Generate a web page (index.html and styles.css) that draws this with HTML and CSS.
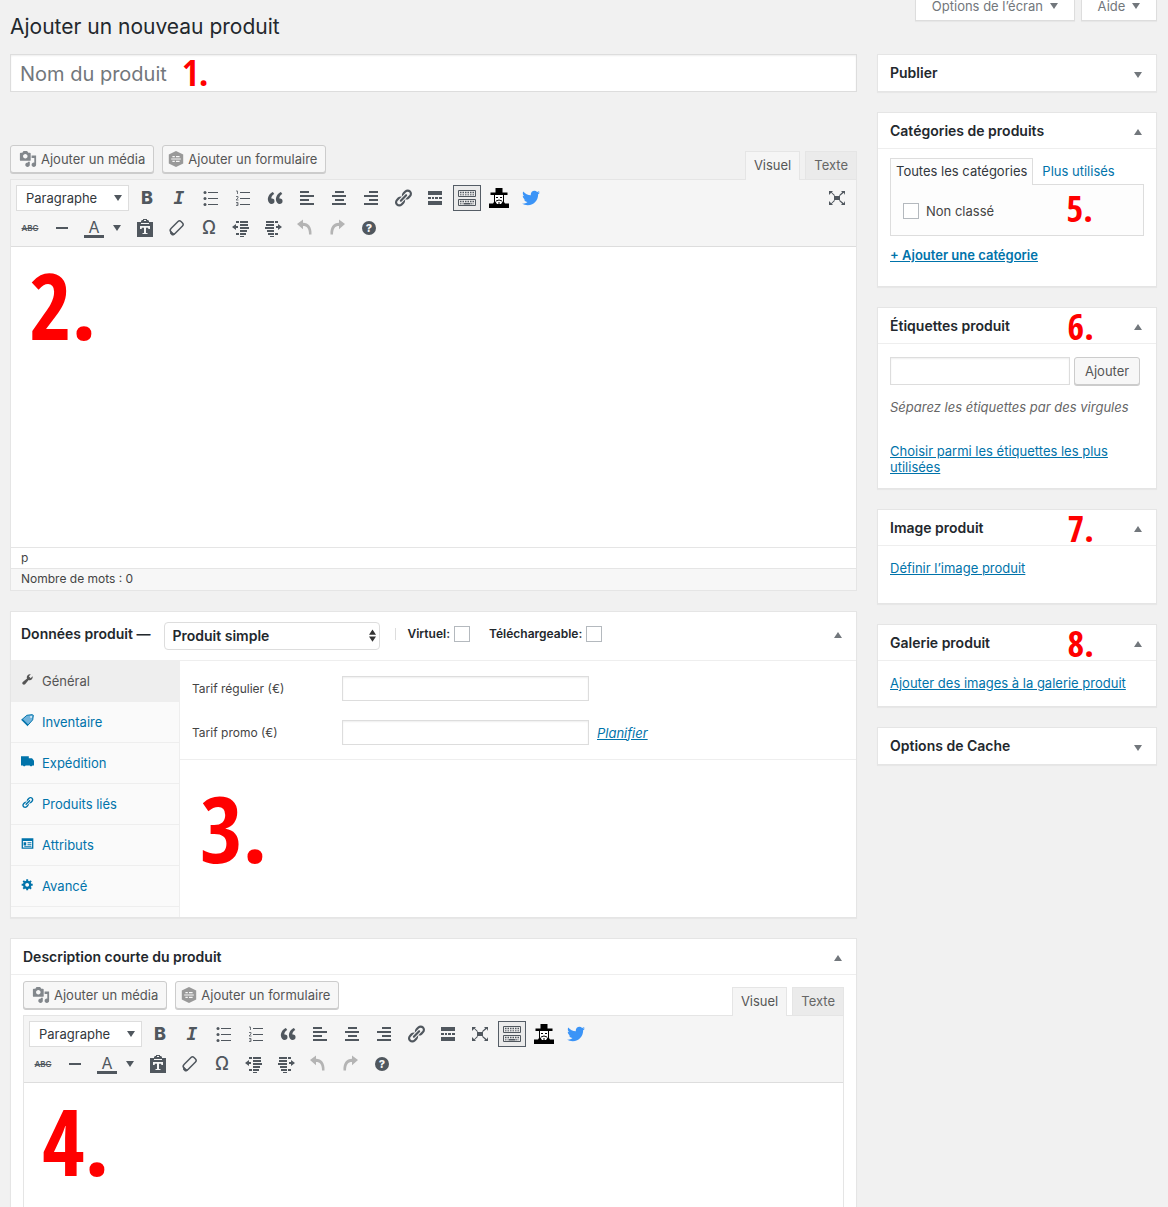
FILE: index.html
```html
<!DOCTYPE html>
<html lang="fr">
<head>
    <meta charset="UTF-8">
    <meta name="viewport" content="width=device-width, initial-scale=1.0">
    <title>Ajouter un nouveau produit</title>
    <link rel="stylesheet" href="styles.css">
</head>
<body>
    <!-- Icon sprite, everything on a 20x20 grid -->
    <svg class="sprite" aria-hidden="true">
        <symbol id="i-media" viewBox="0 0 20 20"><path d="M13 11V4c0-.55-.45-1-1-1h-1.67L9 1H5L3.67 3H2c-.55 0-1 .45-1 1v7c0 .55.45 1 1 1h10c.55 0 1-.45 1-1zM7 4.5c1.38 0 2.5 1.12 2.5 2.5S8.38 9.5 7 9.5 4.5 8.38 4.5 7 5.62 4.5 7 4.5zM14 6h5v10.5c0 1.38-1.12 2.5-2.5 2.5S14 17.88 14 16.5s1.12-2.5 2.5-2.5c.17 0 .34.02.5.05V9h-3V6zm-4 8.05V13h2v3.5c0 1.38-1.12 2.5-2.5 2.5S7 17.88 7 16.5 8.12 14 9.5 14c.17 0 .34.02.5.05z"/></symbol>
        <symbol id="i-form" viewBox="0 0 20 20"><path d="M10 0l9 4.5v11L10 20l-9-4.5v-11z"/><path d="M5.5 7h3M10 7h4.500M5.500 13h3M10 13h4.500M4 10h12" stroke="#f7f7f7" stroke-width="1.5"/></symbol>
        <symbol id="i-ul" viewBox="0 0 20 20"><circle cx="4" cy="4.5" r="1.5"/><circle cx="4" cy="10.5" r="1.5"/><circle cx="4" cy="16.5" r="1.5"/><path d="M7 4h10v1H7zM7 10h10v1H7zM7 16h10v1H7z"/></symbol>
        <symbol id="i-ol" viewBox="0 0 20 20"><path d="M7 4h10v1H7zM7 10h10v1H7zM7 16h10v1H7z"/><path d="M3 3h1.5v3M3 8.500h2v1.500l-2 2h2.500M3 14.500h2v3H3M3.500 16H5" fill="none" stroke="currentColor" stroke-width=".8"/></symbol>
        <symbol id="i-quote" viewBox="0 0 20 20"><path d="M9.49 13.22c0-.74-.2-1.38-.61-1.9-.62-.78-1.83-.88-2.53-.72-.29-1.65 1.11-3.75 2.92-4.65L7.88 4c-2.73 1.3-5.42 4.28-4.96 8.05C3.21 14.43 4.59 16 6.54 16c.85 0 1.56-.25 2.12-.75s.83-1.18.83-2.03zm8.05 0c0-.74-.2-1.38-.61-1.9-.63-.78-1.83-.88-2.53-.72-.29-1.65 1.11-3.75 2.92-4.65L15.93 4c-2.73 1.3-5.41 4.28-4.95 8.05.29 2.38 1.66 3.95 3.61 3.95.85 0 1.56-.25 2.12-.75s.83-1.18.83-2.03z"/></symbol>
        <symbol id="i-left" viewBox="0 0 20 20"><path d="M3 3h9v2H3zM3 7h14v2H3zM3 11h9v2H3zM3 15h14v2H3z"/></symbol>
        <symbol id="i-center" viewBox="0 0 20 20"><path d="M6 3h9v2H6zM3 7h14v2H3zM6 11h9v2H6zM3 15h14v2H3z"/></symbol>
        <symbol id="i-right" viewBox="0 0 20 20"><path d="M8 3h9v2H8zM3 7h14v2H3zM8 11h9v2H8zM3 15h14v2H3z"/></symbol>
        <symbol id="i-link" viewBox="0 0 20 20"><path d="M17.74 2.76c1.68 1.69 1.68 4.41 0 6.1l-1.53 1.52c-1.12 1.12-2.7 1.47-4.14 1.09l2.62-2.61.76-.77.76-.76c.84-.84.84-2.2 0-3.04-.84-.85-2.2-.85-3.04 0l-.77.76-3.38 3.38c-.37-1.44-.02-3.02 1.1-4.14l1.52-1.53c1.69-1.68 4.42-1.68 6.1 0zM8.59 13.43l5.34-5.34c.42-.42.42-1.1 0-1.52-.44-.43-1.13-.39-1.53 0l-5.33 5.34c-.42.42-.42 1.1 0 1.52.44.43 1.13.39 1.52 0zm-.76 2.29l4.14-4.15c.38 1.44.03 3.02-1.09 4.14l-1.52 1.53c-1.69 1.68-4.41 1.68-6.1 0-1.68-1.68-1.68-4.42 0-6.1l1.53-1.52c1.12-1.12 2.7-1.47 4.14-1.1l-4.14 4.15c-.85.84-.85 2.2 0 3.05.84.84 2.2.84 3.04 0z"/></symbol>
        <symbol id="i-more" viewBox="0 0 20 20"><path d="M3 3h14v4H3zM3 13h14v4H3zM3 9h3v2H3zM7 9h2v2H7zM10 9h3v2h-3zM14 9h3v2h-3z"/></symbol>
        <symbol id="i-full" viewBox="0 0 20 20"><path d="M7 8h6v4H7zM2 3h4L4.800 4.200 8 7.200 7.200 8 4.200 4.800 2 7zM18 3v4l-1.200-2.200L12.800 8l-.8-.8 3.200-3L14 3zM2 17v-4l2.200 2.200L7.200 12l.8.8-3.200 3L6 17zM18 17h-4l1.200-1.200-3.200-3 .8-.8 4 3.200L18 13z"/></symbol>
        <symbol id="i-kitchen" viewBox="0 0 20 20"><path d="M1.500 2.500h17v6h-17zM1.500 11.500h17v6h-17z" fill="none" stroke="currentColor"/><path d="M3 4.500h14M3 13.500h14" stroke="currentColor" stroke-width="1.500" stroke-dasharray="1.500 1"/><path d="M3 6.800h14M3 15.800h3M14 15.800h3" stroke="currentColor" stroke-dasharray="1.500 1"/><path d="M6.500 15h7v1.500h-7z"/></symbol>
        <symbol id="i-hat" viewBox="0 0 20 20"><path d="M6.500 0h7v4.500h5V7H15v7l1 1.500h4V20H0v-4.500h4L5 14V7H1.500V4.500h5z"/><path d="M6 7h8v6l-2 3H8l-2-3z" fill="#fff"/><path d="M7 9h2v1H7zM11 9h2v1h-2zM7 12.500l3-1 3 1v1l-3-1-3 1zM9 14.500h2v1H9z"/></symbol>
        <symbol id="i-twitter" viewBox="0 0 20 20"><path d="M18.94 4.46c-.49.73-1.11 1.38-1.83 1.9.01.15.01.31.01.47 0 4.85-3.69 10.44-10.43 10.44-2.07 0-4-.61-5.63-1.65.29.03.58.05.88.05 1.72 0 3.3-.59 4.55-1.57-1.6-.03-2.95-1.09-3.42-2.55.22.04.45.07.69.07.33 0 .66-.05.96-.13-1.67-.34-2.94-1.82-2.94-3.6v-.04c.5.27 1.06.44 1.66.46-.98-.66-1.63-1.78-1.63-3.06 0-.67.18-1.3.5-1.84 1.81 2.22 4.51 3.68 7.56 3.83-.06-.27-.1-.55-.1-.84 0-2.02 1.65-3.66 3.67-3.66 1.06 0 2.01.44 2.68 1.16.83-.17 1.62-.47 2.33-.89-.28.85-.86 1.57-1.62 2.02.75-.08 1.45-.28 2.11-.57z"/></symbol>
        <symbol id="i-hr" viewBox="0 0 20 20"><path d="M4 9h12v2H4z"/></symbol>
        <symbol id="i-paste" viewBox="0 0 20 20"><path fill-rule="evenodd" d="M2 4h4V3l1-1h1V1h4v1h1l1 1v1h4v15H2zM6 5v1h8V5zM9 3h2V2H9zM5 8v3h1.500l.5-1.300h2V15H7.500v1h5v-1H11V9.700h2l.5 1.300H15V8z"/></symbol>
        <symbol id="i-eraser" viewBox="0 0 20 20"><path d="M4 10.500L11 3.500c1-1 2-1 3 0l1.500 1.500c1 1 1 2 0 3L8 15.500c-1 1-2 1-3 0L4 14c-1-1-1-2.500 0-3.500z" fill="none" stroke="currentColor" stroke-width="1.500"/><path d="M3.500 12.500l4.500 4-1.500 1H5l-2-2z"/></symbol>
        <symbol id="i-outdent" viewBox="0 0 20 20"><path d="M5 3h3v2H5zM9 3h8v2H9zM9 6h8v2H9zM9 9h9v2H9zM9 12h7v2H9zM5 15h3v2H5zM9 15h6v2H9zM1 9l4-3v2h2v2H5v2zM9 18h4v1H9z"/></symbol>
        <symbol id="i-indent" viewBox="0 0 20 20"><path d="M3 3h8v2H3zM12 3h3v2h-3zM3 6h8v2H3zM2 9h9v2H2zM4 12h7v2H4zM5 15h6v2H5zM12 15h3v2h-3zM19 9l-4-3v2h-2v2h2v2zM7 18h4v1H7z"/></symbol>
        <symbol id="i-undo" viewBox="0 0 20 20"><path d="M2 6l6-4.500v3.200c5.500 0 9 4 8.500 11.800h-2.500c0-6-2-8.500-6-8.500v3.200z"/></symbol>
        <symbol id="i-redo" viewBox="0 0 20 20"><path d="M18 6l-6-4.500v3.200c-5.500 0-9 4-8.500 11.800H6c0-6 2-8.500 6-8.500v3.200z"/></symbol>
        <symbol id="i-wrench" viewBox="0 0 20 20"><path d="M16.68 9.77c-1.34 1.34-3.3 1.67-4.95.99l-5.41 6.52c-.99.99-2.59.99-3.58 0s-.99-2.59 0-3.57l6.52-5.42c-.68-1.65-.35-3.61.99-4.95 1.28-1.28 3.12-1.62 4.72-1.06l-2.89 2.89 2.82 2.82 2.86-2.87c.53 1.58.18 3.39-1.08 4.65z"/></symbol>
        <symbol id="i-tag" viewBox="0 0 20 20"><path d="M1 9l8-7 8-1 2 1-1 7-8 9z" fill="#70b3dc" stroke="#0073aa" stroke-width="1.500"/><path d="M1 9l9 9 1.500-1.500-9-9z" fill="#0073aa"/><circle cx="15.500" cy="4.500" r="1.300" fill="#fff"/></symbol>
        <symbol id="i-truck" viewBox="0 0 20 20"><path d="M0 2h12v3h5l3 4v7h-2.500a2.500 2.500 0 0 1-4 0H7a2.500 2.500 0 0 1-4 0H0z"/></symbol>
        <symbol id="i-attr" viewBox="0 0 20 20"><path fill-rule="evenodd" d="M1 2h18v16H1zM3 6v10h14V6z"/><path d="M4 8h4v5H4zM10 8h6v1.500h-6zM10 11h6v1.500h-6zM5 14h11v1H5z"/></symbol>
        <symbol id="i-gear" viewBox="0 0 20 20"><path d="M18 12h-2.18c-.17.7-.44 1.35-.81 1.93l1.54 1.54-2.1 2.1-1.54-1.54c-.58.36-1.23.63-1.91.79V19H8v-2.18c-.68-.16-1.33-.43-1.91-.79l-1.54 1.54-2.12-2.12 1.54-1.54c-.36-.58-.63-1.23-.79-1.91H1V9.03h2.17c.16-.7.44-1.35.8-1.94L2.43 5.55l2.1-2.1 1.54 1.54c.58-.37 1.24-.64 1.93-.81V2h3v2.18c.68.16 1.33.43 1.91.79l1.54-1.54 2.12 2.12-1.54 1.54c.36.59.64 1.24.8 1.94H18V12zm-8.5 1.5c1.66 0 3-1.34 3-3s-1.34-3-3-3-3 1.34-3 3 1.34 3 3 3z"/></symbol>
        <symbol id="i-updown" viewBox="0 0 8 14"><path d="M4 0l4 6H0zM4 14l4-6H0z"/></symbol>
    </svg>

    <div class="wrap">
        <div class="screen-links">
            <button type="button">Options de l’écran <span class="arrow down"></span></button>
            <button type="button">Aide <span class="arrow down"></span></button>
        </div>

        <h1>Ajouter un nouveau produit</h1>

        <div class="columns">
            <main>
                <div class="title-field">
                    <input type="text" id="title" placeholder="Nom du produit" aria-label="Nom du produit">
                    <span class="mark mark-title">1.</span>
                </div>

                <!-- Main editor -->
                <section class="editor">
                    <div class="editor-tools">
                        <div class="media-buttons">
                            <button type="button" class="button"><svg><use href="#i-media"/></svg>Ajouter un média</button>
                            <button type="button" class="button add-form"><svg><use href="#i-form"/></svg>Ajouter un formulaire</button>
                        </div>
                        <div class="editor-tabs">
                            <button type="button" class="active">Visuel</button>
                            <button type="button">Texte</button>
                        </div>
                    </div>
                    <div class="editor-container">
                        <div class="toolbar">
                            <div class="toolbar-row">
                                <div class="format">
                                    <select aria-label="Format"><option>Paragraphe</option></select>
                                    <span class="arrow down"></span>
                                </div>
                                <button type="button" class="bold" aria-label="Gras">B</button>
                                <button type="button" class="italic" aria-label="Italique">I</button>
                                <button type="button" aria-label="Liste à puces"><svg><use href="#i-ul"/></svg></button>
                                <button type="button" aria-label="Liste numérotée"><svg><use href="#i-ol"/></svg></button>
                                <button type="button" aria-label="Citation"><svg><use href="#i-quote"/></svg></button>
                                <button type="button" aria-label="Aligner à gauche"><svg><use href="#i-left"/></svg></button>
                                <button type="button" aria-label="Centrer"><svg><use href="#i-center"/></svg></button>
                                <button type="button" aria-label="Aligner à droite"><svg><use href="#i-right"/></svg></button>
                                <button type="button" aria-label="Lien"><svg><use href="#i-link"/></svg></button>
                                <button type="button" aria-label="Lire la suite"><svg><use href="#i-more"/></svg></button>
                                <button type="button" class="pressed" aria-label="Outils"><svg><use href="#i-kitchen"/></svg></button>
                                <button type="button" class="hat" aria-label="Profil"><svg><use href="#i-hat"/></svg></button>
                                <button type="button" class="twitter" aria-label="Twitter"><svg><use href="#i-twitter"/></svg></button>
                                <button type="button" class="push" aria-label="Plein écran"><svg><use href="#i-full"/></svg></button>
                            </div>
                            <div class="toolbar-row">
                                <button type="button" class="strike" aria-label="Barré">ABC</button>
                                <button type="button" aria-label="Ligne horizontale"><svg><use href="#i-hr"/></svg></button>
                                <button type="button" class="color" aria-label="Couleur du texte"><span>A</span><i class="arrow down"></i></button>
                                <button type="button" aria-label="Coller en texte"><svg><use href="#i-paste"/></svg></button>
                                <button type="button" aria-label="Effacer la mise en forme"><svg><use href="#i-eraser"/></svg></button>
                                <button type="button" class="omega" aria-label="Caractères spéciaux">Ω</button>
                                <button type="button" aria-label="Diminuer le retrait"><svg><use href="#i-outdent"/></svg></button>
                                <button type="button" aria-label="Augmenter le retrait"><svg><use href="#i-indent"/></svg></button>
                                <button type="button" class="disabled" aria-label="Annuler"><svg><use href="#i-undo"/></svg></button>
                                <button type="button" class="disabled" aria-label="Rétablir"><svg><use href="#i-redo"/></svg></button>
                                <button type="button" class="help" aria-label="Aide"><span>?</span></button>
                            </div>
                        </div>
                        <div class="editor-body">
                            <textarea aria-label="Description du produit"></textarea>
                            <span class="mark mark-big">2.</span>
                        </div>
                        <div class="path">p</div>
                        <div class="word-count">Nombre de mots : 0</div>
                    </div>
                </section>

                <!-- Product data -->
                <section class="box">
                    <div class="data-header">
                        <h2>Données produit —</h2>
                        <div class="type">
                            <select aria-label="Type de produit"><option>Produit simple</option></select>
                            <svg><use href="#i-updown"/></svg>
                        </div>
                        <span class="sep"></span>
                        <label for="virtual">Virtuel: <input type="checkbox" id="virtual"></label>
                        <label for="download">Téléchargeable: <input type="checkbox" id="download"></label>
                        <button type="button" class="toggle" aria-label="Replier"><span class="arrow up"></span></button>
                    </div>
                    <div class="data-body">
                        <nav>
                            <a href="#general" class="active"><svg><use href="#i-wrench"/></svg>Général</a>
                            <a href="#inventory"><svg><use href="#i-tag"/></svg>Inventaire</a>
                            <a href="#shipping"><svg><use href="#i-truck"/></svg>Expédition</a>
                            <a href="#linked"><svg><use href="#i-link"/></svg>Produits liés</a>
                            <a href="#attributes"><svg><use href="#i-attr"/></svg>Attributs</a>
                            <a href="#advanced"><svg><use href="#i-gear"/></svg>Avancé</a>
                        </nav>
                        <div class="data-panel">
                            <div class="pricing">
                                <div class="field">
                                    <label for="price">Tarif régulier (€)</label>
                                    <input type="text" id="price">
                                </div>
                                <div class="field">
                                    <label for="sale">Tarif promo (€)</label>
                                    <input type="text" id="sale">
                                    <a href="#schedule">Planifier</a>
                                </div>
                            </div>
                            <span class="mark mark-big">3.</span>
                        </div>
                    </div>
                </section>

                <!-- Short description -->
                <section class="box">
                    <div class="box-header">
                        <h2>Description courte du produit</h2>
                        <button type="button" class="toggle" aria-label="Replier"><span class="arrow up"></span></button>
                    </div>
                    <div class="editor small">
                        <div class="editor-tools">
                            <div class="media-buttons">
                                <button type="button" class="button"><svg><use href="#i-media"/></svg>Ajouter un média</button>
                                <button type="button" class="button add-form"><svg><use href="#i-form"/></svg>Ajouter un formulaire</button>
                            </div>
                            <div class="editor-tabs">
                                <button type="button" class="active">Visuel</button>
                                <button type="button">Texte</button>
                            </div>
                        </div>
                        <div class="editor-container">
                            <div class="toolbar">
                                <div class="toolbar-row">
                                    <div class="format">
                                        <select aria-label="Format"><option>Paragraphe</option></select>
                                        <span class="arrow down"></span>
                                    </div>
                                    <button type="button" class="bold" aria-label="Gras">B</button>
                                    <button type="button" class="italic" aria-label="Italique">I</button>
                                    <button type="button" aria-label="Liste à puces"><svg><use href="#i-ul"/></svg></button>
                                    <button type="button" aria-label="Liste numérotée"><svg><use href="#i-ol"/></svg></button>
                                    <button type="button" aria-label="Citation"><svg><use href="#i-quote"/></svg></button>
                                    <button type="button" aria-label="Aligner à gauche"><svg><use href="#i-left"/></svg></button>
                                    <button type="button" aria-label="Centrer"><svg><use href="#i-center"/></svg></button>
                                    <button type="button" aria-label="Aligner à droite"><svg><use href="#i-right"/></svg></button>
                                    <button type="button" aria-label="Lien"><svg><use href="#i-link"/></svg></button>
                                    <button type="button" aria-label="Lire la suite"><svg><use href="#i-more"/></svg></button>
                                    <button type="button" aria-label="Plein écran"><svg><use href="#i-full"/></svg></button>
                                    <button type="button" class="pressed" aria-label="Outils"><svg><use href="#i-kitchen"/></svg></button>
                                    <button type="button" class="hat" aria-label="Profil"><svg><use href="#i-hat"/></svg></button>
                                    <button type="button" class="twitter" aria-label="Twitter"><svg><use href="#i-twitter"/></svg></button>
                                </div>
                                <div class="toolbar-row">
                                    <button type="button" class="strike" aria-label="Barré">ABC</button>
                                    <button type="button" aria-label="Ligne horizontale"><svg><use href="#i-hr"/></svg></button>
                                    <button type="button" class="color" aria-label="Couleur du texte"><span>A</span><i class="arrow down"></i></button>
                                    <button type="button" aria-label="Coller en texte"><svg><use href="#i-paste"/></svg></button>
                                    <button type="button" aria-label="Effacer la mise en forme"><svg><use href="#i-eraser"/></svg></button>
                                    <button type="button" class="omega" aria-label="Caractères spéciaux">Ω</button>
                                    <button type="button" aria-label="Diminuer le retrait"><svg><use href="#i-outdent"/></svg></button>
                                    <button type="button" aria-label="Augmenter le retrait"><svg><use href="#i-indent"/></svg></button>
                                    <button type="button" class="disabled" aria-label="Annuler"><svg><use href="#i-undo"/></svg></button>
                                    <button type="button" class="disabled" aria-label="Rétablir"><svg><use href="#i-redo"/></svg></button>
                                    <button type="button" class="help" aria-label="Aide"><span>?</span></button>
                                </div>
                            </div>
                            <div class="editor-body">
                                <textarea aria-label="Description courte"></textarea>
                                <span class="mark mark-big">4.</span>
                            </div>
                        </div>
                    </div>
                </section>
            </main>

            <aside>
                <section class="box closed">
                    <div class="box-header">
                        <h2>Publier</h2>
                        <button type="button" class="toggle" aria-label="Déplier"><span class="arrow down"></span></button>
                    </div>
                </section>

                <section class="box">
                    <div class="box-header">
                        <h2>Catégories de produits</h2>
                        <button type="button" class="toggle" aria-label="Replier"><span class="arrow up"></span></button>
                    </div>
                    <div class="categories">
                        <div class="cat-tabs">
                            <a href="#all" class="active">Toutes les catégories</a>
                            <a href="#popular">Plus utilisés</a>
                        </div>
                        <div class="cat-list">
                            <label for="uncategorized"><input type="checkbox" id="uncategorized">Non classé</label>
                            <span class="mark mark-side">5.</span>
                        </div>
                        <a href="#add-category" class="add-category">+ Ajouter une catégorie</a>
                    </div>
                </section>

                <section class="box">
                    <div class="box-header">
                        <h2>Étiquettes produit</h2>
                        <span class="mark mark-side">6.</span>
                        <button type="button" class="toggle" aria-label="Replier"><span class="arrow up"></span></button>
                    </div>
                    <div class="tags">
                        <div class="tag-form">
                            <input type="text" aria-label="Étiquettes">
                            <button type="button" class="button">Ajouter</button>
                        </div>
                        <p>Séparez les étiquettes par des virgules</p>
                        <a href="#tag-cloud">Choisir parmi les étiquettes les plus utilisées</a>
                    </div>
                </section>

                <section class="box">
                    <div class="box-header">
                        <h2>Image produit</h2>
                        <span class="mark mark-side">7.</span>
                        <button type="button" class="toggle" aria-label="Replier"><span class="arrow up"></span></button>
                    </div>
                    <div class="inside image">
                        <a href="#image">Définir l’image produit</a>
                    </div>
                </section>

                <section class="box">
                    <div class="box-header">
                        <h2>Galerie produit</h2>
                        <span class="mark mark-side">8.</span>
                        <button type="button" class="toggle" aria-label="Replier"><span class="arrow up"></span></button>
                    </div>
                    <div class="inside">
                        <a href="#gallery">Ajouter des images à la galerie produit</a>
                    </div>
                </section>

                <section class="box closed">
                    <div class="box-header">
                        <h2>Options de Cache</h2>
                        <button type="button" class="toggle" aria-label="Déplier"><span class="arrow down"></span></button>
                    </div>
                </section>
            </aside>
        </div>
    </div>
</body>
</html>
```

FILE: styles.css
```css
* {
    margin: 0;
    padding: 0;
    box-sizing: border-box;
}

body {
    background-color: #f1f1f1;
    color: #444;
    font-family: Inter, "Open Sans", sans-serif;
    font-size: 13px;
    line-height: 16px;
}

button, input, select, textarea {
    font: inherit;
    color: inherit;
    border-radius: 0;
}

button {
    background: none;
    border: none;
    cursor: pointer;
}

a {
    color: #0073aa;
}

svg {
    display: block;
    fill: currentColor;
}

.sprite {
    position: absolute;
    width: 0;
    height: 0;
}

.wrap {
    height: 100vh;
    overflow: hidden;
    padding: 0 11px 0 10px;
}

/* Triangles */
.arrow {
    display: inline-block;
    border: 4px solid transparent;
    flex: none;
}

.arrow.down {
    border-top: 6px solid currentColor;
    border-bottom: 0;
}

.arrow.up {
    border-bottom: 6px solid currentColor;
    border-top: 0;
}

/* Screen options */
.screen-links {
    float: right;
    display: flex;
    gap: 6px;
}

.screen-links button {
    height: 21px;
    padding: 0 16px 8px;
    background-color: #fff;
    border: 1px solid #ddd;
    border-top: none;
    color: #72777c;
    line-height: 12px;
    box-shadow: 0 1px 1px rgba(0, 0, 0, 0.04);
}

.screen-links .arrow {
    margin: 0 0 2px 3px;
}

h1 {
    padding: 12px 0 13px;
    font-size: 21px;
    line-height: 29px;
    font-weight: 400;
    color: #23282d;
}

h2 {
    font-size: 14px;
    line-height: 20px;
    font-weight: 600;
    color: #23282d;
}

.columns {
    display: grid;
    grid-template-columns: minmax(0, 1fr) 280px;
    gap: 20px;
}

input[type="text"] {
    background-color: #fff;
    border: 1px solid #ddd;
    box-shadow: inset 0 1px 2px rgba(0, 0, 0, 0.07);
}

input[type="checkbox"] {
    appearance: none;
    width: 16px;
    height: 16px;
    background-color: #fff;
    border: 1px solid #b4b9be;
    flex: none;
}

.title-field {
    position: relative;
    margin-bottom: 53px;
}

.title-field input {
    display: block;
    width: 100%;
    height: 38px;
    padding: 2px 9px 0;
    font-size: 20px;
}

.title-field input::placeholder {
    color: #72777c;
}

/* Red step numbers */
.mark {
    position: absolute;
    color: #f00;
    font-family: "Open Sans Condensed", "Liberation Sans Narrow", "Roboto Condensed", "Liberation Sans", sans-serif;
    font-weight: 700;
    pointer-events: none;
}

.mark-title, .mark-side {
    font-size: 36px;
    line-height: 38px;
}

.mark-title {
    left: 172px;
    top: 0;
}

.mark-side {
    right: 62px;
    top: 0;
}

.mark-big {
    left: 18px;
    top: 12px;
    font-size: 92px;
    line-height: 92px;
}

/* Buttons */
.button {
    display: flex;
    align-items: center;
    height: 28px;
    padding: 0 8px;
    background-color: #f7f7f7;
    border: 1px solid #ccc;
    border-radius: 3px;
    box-shadow: 0 1px 0 #ccc;
    color: #555;
}

.button svg {
    width: 18px;
    height: 18px;
    margin-right: 4px;
    color: #82878c;
}

.add-form {
    padding-left: 5px;
}

.add-form svg {
    width: 16px;
    height: 16px;
    color: #999;
}

/* Editor */
.editor {
    margin-bottom: 20px;
}

.editor-tools {
    display: flex;
    justify-content: space-between;
    height: 34px;
}

.media-buttons {
    display: flex;
    gap: 8px;
}

.editor-tabs {
    display: flex;
    align-items: flex-end;
    gap: 5px;
}

.editor-tabs button {
    height: 28px;
    padding: 0 8px 2px;
    background-color: #ebebeb;
    border: 1px solid #e5e5e5;
    border-bottom: none;
    color: #666;
}

.editor-tabs .active {
    position: relative;
    z-index: 1;
    height: 29px;
    margin-bottom: -1px;
    padding-bottom: 3px;
    background-color: #f5f5f5;
    color: #555;
}

.editor-container {
    border: 1px solid #e5e5e5;
}

.toolbar {
    display: flex;
    flex-direction: column;
    gap: 4px;
    padding: 5px;
    background-color: #f5f5f5;
    border-bottom: 1px solid #ddd;
}

.toolbar-row {
    display: flex;
    gap: 4px;
}

.toolbar-row button {
    display: flex;
    align-items: center;
    justify-content: center;
    width: 28px;
    height: 26px;
    color: #50575e;
}

.toolbar-row button svg {
    width: 20px;
    height: 20px;
}

.toolbar-row .bold {
    font-size: 18px;
    font-weight: 800;
}

.toolbar-row .italic {
    font-family: "DejaVu Sans Mono", monospace;
    font-size: 18px;
    font-weight: 700;
    font-style: italic;
}

.toolbar-row .strike {
    font-size: 8px;
    font-weight: 600;
    text-decoration: line-through;
}

.toolbar-row .omega {
    font-size: 18px;
    font-weight: 500;
}

.toolbar-row .pressed {
    border: 1px solid #555d66;
    background-color: #ebebeb;
}

.toolbar-row .hat {
    color: #000;
}

.toolbar-row .twitter {
    color: #3b94f7;
}

.toolbar-row .disabled {
    color: #b4b4b4;
}

.toolbar-row .push {
    margin-left: auto;
}

.toolbar-row .color {
    width: 47px;
    padding-right: 2px;
    gap: 9px;
}

.color span {
    width: 20px;
    border-bottom: 3px solid #50575e;
    font-size: 16px;
    line-height: 16px;
}

.help span {
    width: 14px;
    height: 14px;
    border-radius: 50%;
    background-color: #50575e;
    color: #f5f5f5;
    font-size: 11px;
    line-height: 14px;
    font-weight: 800;
}

.format {
    position: relative;
}

.format select {
    appearance: none;
    display: block;
    width: 113px;
    height: 26px;
    padding: 0 9px;
    background-color: #fff;
    border: 1px solid #ddd;
    color: #32373c;
}

.format .arrow {
    position: absolute;
    right: 7px;
    top: 10px;
    color: #50575e;
}

.editor-body {
    position: relative;
}

.editor-body textarea {
    display: block;
    width: 100%;
    height: 300px;
    background-color: #fff;
    border: none;
    resize: none;
}

.path, .word-count {
    padding: 2px 10px;
    border-top: 1px solid #e5e5e5;
    font-size: 12px;
}

.path {
    background-color: #fff;
}

.word-count {
    padding-bottom: 3px;
    background-color: #f7f7f7;
}

/* Boxes */
.box {
    margin-bottom: 20px;
    background-color: #fff;
    border: 1px solid #e5e5e5;
    box-shadow: 0 1px 1px rgba(0, 0, 0, 0.04);
}

.box-header {
    position: relative;
    display: flex;
    align-items: center;
    justify-content: space-between;
    height: 36px;
    padding-left: 12px;
    border-bottom: 1px solid #eee;
}

.closed .box-header {
    border-bottom: none;
}

.toggle {
    display: flex;
    align-items: center;
    justify-content: center;
    width: 36px;
    height: 36px;
    padding-top: 3px;
    color: #72777c;
}

.small {
    margin: 0;
    padding: 6px 12px 12px;
}

/* Product data */
.data-header {
    display: flex;
    align-items: center;
    height: 49px;
    padding-left: 10px;
    border-bottom: 1px solid #eee;
}

.data-header h2, .data-header label {
    margin-bottom: 4px;
}

.type {
    position: relative;
    margin-left: 13px;
}

.type select {
    appearance: none;
    display: block;
    width: 216px;
    height: 28px;
    padding: 0 8px;
    background-color: #fff;
    border: 1px solid #ddd;
    border-radius: 4px;
    font-size: 14px;
    font-weight: 600;
    color: #23282d;
}

.type svg {
    position: absolute;
    right: 4px;
    top: 7px;
    width: 7px;
    height: 13px;
    color: #333;
}

.sep {
    width: 1px;
    height: 12px;
    margin: 0 12px 4px 15px;
    background-color: #ddd;
}

.data-header label {
    display: flex;
    align-items: center;
    gap: 4px;
    margin-right: 19px;
    font-size: 12px;
    font-weight: 600;
    color: #23282d;
}

.data-header .toggle {
    margin: 0 0 6px auto;
}

.data-body {
    display: flex;
}

.data-body nav {
    width: 169px;
    padding-bottom: 10px;
    background-color: #fafafa;
    border-right: 1px solid #eee;
}

.data-body nav a {
    display: flex;
    align-items: center;
    gap: 8px;
    height: 41px;
    padding-left: 10px;
    border-bottom: 1px solid #eee;
    text-decoration: none;
}

.data-body nav svg {
    width: 13px;
    height: 13px;
    margin-bottom: 4px;
}

.data-body nav .active {
    background-color: #eee;
    color: #555;
}

.data-panel {
    position: relative;
    flex: 1;
}

.data-panel .mark {
    left: 20px;
    top: 121px;
}

.pricing {
    display: flex;
    flex-direction: column;
    gap: 19px;
    padding: 15px 12px 14px;
    border-bottom: 1px solid #eee;
}

.field {
    display: flex;
    align-items: center;
}

.field label {
    width: 150px;
    font-size: 12px;
}

.field input {
    width: 247px;
    height: 25px;
    margin-right: 8px;
}

.field a {
    font-style: italic;
}

/* Sidebar */
.categories {
    padding: 9px 12px 23px;
}

.cat-tabs {
    display: flex;
}

.cat-tabs a {
    padding: 5px 9px;
    text-decoration: none;
}

.cat-tabs .active {
    position: relative;
    z-index: 1;
    margin-bottom: -1px;
    padding: 4px 5px 6px;
    background-color: #fdfdfd;
    border: 1px solid #ddd;
    border-bottom: none;
    color: #32373c;
}

.cat-list {
    position: relative;
    margin-bottom: 11px;
    padding: 18px 12px 16px;
    background-color: #fdfdfd;
    border: 1px solid #ddd;
}

.cat-list label {
    display: flex;
    gap: 7px;
}

.cat-list .mark {
    right: 50px;
    top: 5px;
}

.add-category {
    font-weight: 600;
}

.tags {
    padding: 13px 12px;
}

.tag-form {
    display: flex;
    gap: 4px;
    margin-bottom: 14px;
}

.tag-form input {
    width: 180px;
    height: 28px;
}

.tag-form .button {
    padding: 0 10px;
}

.tags p {
    margin-bottom: 28px;
    font-style: italic;
    color: #666;
}

.inside {
    padding: 14px 12px 15px;
}

.image {
    padding-bottom: 27px;
}
```
